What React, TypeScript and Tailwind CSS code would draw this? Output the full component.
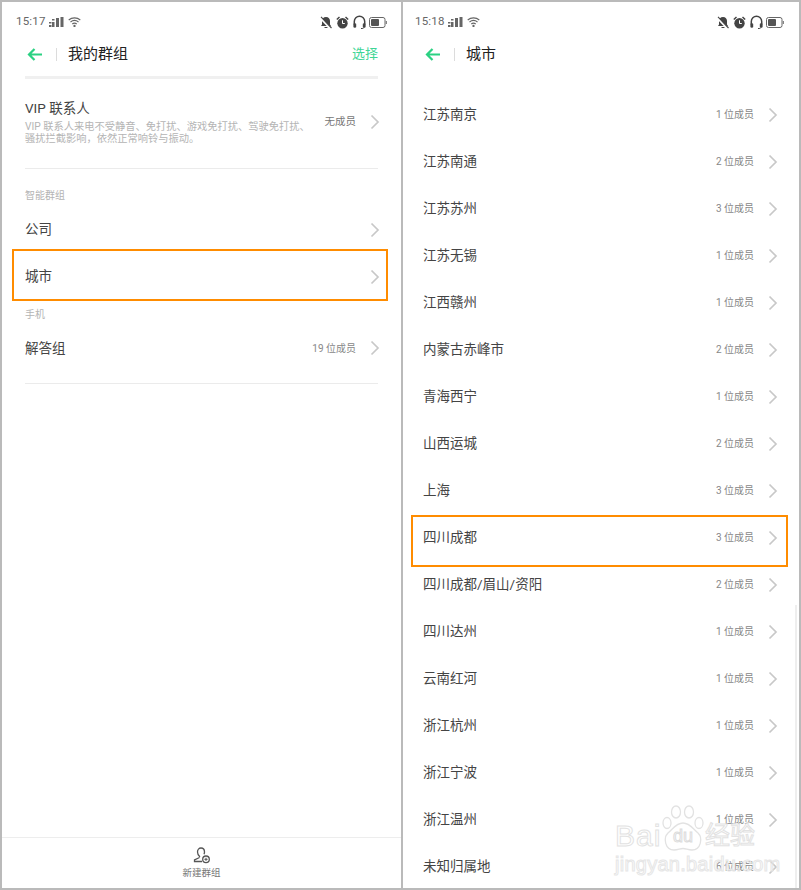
import React from 'react';

const cjk = "font-['Roboto','Noto_Sans_CJK_SC',sans-serif]";

function Chevron() {
  return (
    <svg width="10" height="16" viewBox="0 0 10 16" fill="none" className="shrink-0 -mr-[2px]">
      <path d="M1.500 1.500 8 8l-6.500 6.500" stroke="#c8c8c8" strokeWidth="1.700" />
    </svg>
  );
}

function BackArrow() {
  return (
    <svg width="15" height="13" viewBox="0 0 15 13" fill="none">
      <path d="M15 6.500H2M7.500 1 2 6.500 7.500 12" stroke="#2bd182" strokeWidth="2.200" />
    </svg>
  );
}

function StatusBar({ time }: { time: string }) {
  return (
    <div className="flex items-center justify-between h-[14px] text-[#666]">
      <div className="flex items-center gap-[3px]">
        <span className="text-[11.5px] leading-none tracking-[0.2px]">{time}</span>
        <svg width="15" height="10" viewBox="0 0 15 10" fill="#666">
          <rect x="0" y="5" width="2.500" height="1.500" />
          <rect x="0" y="8" width="2.500" height="2" />
          <rect x="3" y="2" width="2.500" height="1.500" />
          <rect x="3" y="5" width="2.500" height="5" />
          <rect x="7" y="1" width="3" height="9" />
          <rect x="11.500" y="0" width="3" height="10" />
        </svg>
        <svg width="13" height="10" viewBox="0 0 13 10" fill="none" stroke="#666" strokeWidth="1.100" className="ml-[1px]">
          <path d="M.7 3C4 .2 9 .2 12.300 3M2.500 5C5 3 8 3 10.500 5M4.300 7C5.500 6 7.500 6 8.700 7" />
          <circle cx="6.500" cy="9" r=".6" fill="#666" />
        </svg>
      </div>
      <div className="flex items-center gap-[3px]">
        <svg width="12" height="13" viewBox="0 0 12 13" fill="#444">
          <path d="M6 1c2.600 0 4 1.900 4 4v3.500l1 1.500H1l1-1.500V5c0-2.100 1.400-4 4-4Z" />
          <path d="M4.500 11h3v1h-3Z" />
          <path d="M.5 2 10 12" stroke="#fff" strokeWidth="2.200" />
          <path d="M1 .8 11.500 12" stroke="#444" strokeWidth="1.100" />
        </svg>
        <svg width="13" height="13" viewBox="0 0 13 13" fill="#444" className="mx-[1px]">
          <circle cx="6.500" cy="7.300" r="5.200" />
          <path d="M.3 3 3 .5l1 1.100L1.300 4ZM12.700 3 10 .5 9 1.600 11.700 4Z" />
          <path d="M6.500 4.300v3.200h2.300" stroke="#fff" strokeWidth="1" fill="none" />
        </svg>
        <svg width="13" height="14" viewBox="0 0 13 14" fill="none" stroke="#444" strokeWidth="1.500">
          <path d="M1.300 9V6.500a5.200 5.200 0 0 1 10.400 0V9" />
          <rect x=".6" y="8.500" width="2.400" height="4" rx=".8" fill="#444" strokeWidth=".4" />
          <rect x="10" y="8.500" width="2.400" height="4" rx=".8" fill="#444" strokeWidth=".4" />
          <path d="M11 12.500c-.5 1-1.500 1-3 1" strokeWidth="1" />
        </svg>
        <svg width="18" height="11" viewBox="0 0 18 11" fill="none">
          <rect x=".5" y=".5" width="15.500" height="10" rx="2" stroke="#666" />
          <rect x="2" y="2" width="8" height="7" rx="1" fill="#555" />
          <path d="M17.300 4v3" stroke="#666" />
        </svg>
      </div>
    </div>
  );
}

function Header({ title, action }: { title: string; action?: string }) {
  return (
    <div className="flex items-center h-[24px] mt-[13px]">
      <span className="flex w-[29px] ml-[2px]"><BackArrow /></span>
      <span className="w-px h-[13px] bg-[#dcdcdc] mr-[11px]" />
      <span className="text-[15px] text-[#222] flex-1">{title}</span>
      {action && <span className="text-[13px] text-[#3ed596]">{action}</span>}
    </div>
  );
}

function Row({ name, count, h = 'h-[47px]' }: { name: string; count?: string; h?: string }) {
  return (
    <div className={`flex items-center ${h}`}>
      <span className="text-[13.5px] text-[#444] flex-1">{name}</span>
      {count && <span className="text-[10px] text-[#888] mr-[14px]">{count}</span>}
      <Chevron />
    </div>
  );
}

const cities = [
  ['江苏南京', '1 位成员'],
  ['江苏南通', '2 位成员'],
  ['江苏苏州', '3 位成员'],
  ['江苏无锡', '1 位成员'],
  ['江西赣州', '1 位成员'],
  ['内蒙古赤峰市', '2 位成员'],
  ['青海西宁', '1 位成员'],
  ['山西运城', '2 位成员'],
  ['上海', '3 位成员'],
  ['四川成都', '3 位成员'],
  ['四川成都/眉山/资阳', '2 位成员'],
  ['四川达州', '1 位成员'],
  ['云南红河', '1 位成员'],
  ['浙江杭州', '1 位成员'],
  ['浙江宁波', '1 位成员'],
  ['浙江温州', '1 位成员'],
  ['未知归属地', '6 位成员'],
];

function Watermark() {
  return (
    <div className="absolute left-[615px] top-[805px] w-[146px] h-[70px] pointer-events-none">
      <svg width="42" height="48" viewBox="0 0 42 48" fill="none" stroke="#e2e2e2" strokeWidth="1.300" className="absolute left-[47px] top-0">
        <ellipse cx="5" cy="18" rx="4" ry="5.500" />
        <ellipse cx="14" cy="7" rx="4.500" ry="6" />
        <ellipse cx="27" cy="7" rx="4.500" ry="6" />
        <ellipse cx="37" cy="18" rx="4" ry="5.500" />
        <path d="M21 18c7 0 10 6 15 10 5 5 3 17-6 17-4 0-6-1.500-9-1.500S16 45 12 45C3 45 1 33 6 28c5-4 8-10 15-10Z" />
      </svg>
      <span className="absolute left-0 top-[14px] text-[30px] leading-[34px] tracking-[1px] font-['Liberation_Sans',sans-serif] text-transparent [-webkit-text-stroke:1px_#e2e2e2]">Bai</span>
      <span className="absolute left-[58px] top-[21px] text-[18px] leading-[20px] font-['Liberation_Sans',sans-serif] text-transparent [-webkit-text-stroke:1px_#dcdcdc]">du</span>
      <span className="absolute left-[90px] top-[15px] text-[25px] leading-[32px] text-transparent [-webkit-text-stroke:1px_#e2e2e2]">经验</span>
      <span className="absolute left-0 top-[47px] text-[20px] leading-[24px] tracking-[0.25px] whitespace-nowrap font-['Liberation_Sans',sans-serif] text-transparent [-webkit-text-stroke:1px_#e6e6e6]">jingyan.baidu.com</span>
    </div>
  );
}

export default function App() {
  return (
    <div className={`relative flex gap-[2px] w-[801px] h-[890px] p-[2px] overflow-hidden bg-[#bababa] ${cjk}`}>
      {/* left phone */}
      <div className="relative flex flex-col w-[399px] bg-white">
        <div className="px-[14px] pt-[13px]"><StatusBar time="15:17" /></div>
        <div className="flex flex-col flex-1 px-[23px]">
          <Header title="我的群组" action="选择" />
          <div className="h-[3px] bg-[#f0f0f0] mt-[10px]" />
          <div className="flex items-center h-[90px] pb-[3px] border-b border-[#ebebeb]">
            <div className="flex-1">
              <div className="text-[13.5px] leading-[18px] text-[#444]">VIP 联系人</div>
              <div className="text-[10.25px] leading-[12px] mt-[4px] text-[#b4b4b4]">VIP 联系人来电不受静音、免打扰、游戏免打扰、驾驶免打扰、<br />骚扰拦截影响，依然正常响铃与振动。</div>
            </div>
            <span className="text-[10.5px] text-[#777] mr-[14px]">无成员</span>
            <Chevron />
          </div>
          <div className="text-[10px] leading-[12px] text-[#b4b4b4] mt-[21px] mb-[4px]">智能群组</div>
          <Row name="公司" />
          <Row name="城市" />
          <div className="text-[10px] leading-[12px] text-[#b4b4b4] mt-[9px]">手机</div>
          <Row name="解答组" count="19 位成员" h="h-[54px]" />
          <div className="h-px bg-[#ebebeb] mt-[8px]" />
        </div>
        <div className="flex flex-col items-center h-[51px] border-t border-[#ededed] pt-[8px]">
          <svg width="18" height="18" viewBox="0 0 18 18" fill="none" stroke="#555" strokeWidth="1.300">
            <path d="M7 11c-1.500-1.200-2.500-3-2.500-5C4.500 3.500 6 2 8 2s3.500 1.500 3.500 4c0 .800-.2 1.500-.5 2.200M6.500 11.500 1.500 14v1.500H9" />
            <circle cx="13" cy="13.300" r="3.300" />
            <path d="M13 11.700v3.200M11.400 13.300h3.200" strokeWidth="1" />
          </svg>
          <span className="text-[9.5px] leading-[12px] text-[#777] mt-[3px]">新建群组</span>
        </div>
        {/* orange highlight */}
        <div className="absolute left-[10px] top-[247px] w-[376px] h-[52px] border-2 border-[#ff8c00]" />
      </div>

      {/* right phone */}
      <div className="relative flex flex-col w-[396px] bg-white">
        <div className="pl-[12px] pt-[13px] pr-[15px]"><StatusBar time="15:18" /></div>
        <div className="px-[20px]"><Header title="城市" /></div>
        <div className="h-px bg-[#f4f4f4] mt-[10px]" />
        <div className="flex flex-col pt-[15px] pl-[20px] pr-[23px]">
          {cities.map(([name, count]) => (
            <Row key={name} name={name} count={count} />
          ))}
        </div>
        {/* orange highlight */}
        <div className="absolute left-[8px] top-[513px] w-[377px] h-[52px] border-2 border-[#ff8c00]" />
        {/* scrollbar */}
        <div className="absolute right-[2px] top-[603px] bottom-0 w-[2px] bg-[#eeeeee]" />
      </div>
      <Watermark />
    </div>
  );
}
